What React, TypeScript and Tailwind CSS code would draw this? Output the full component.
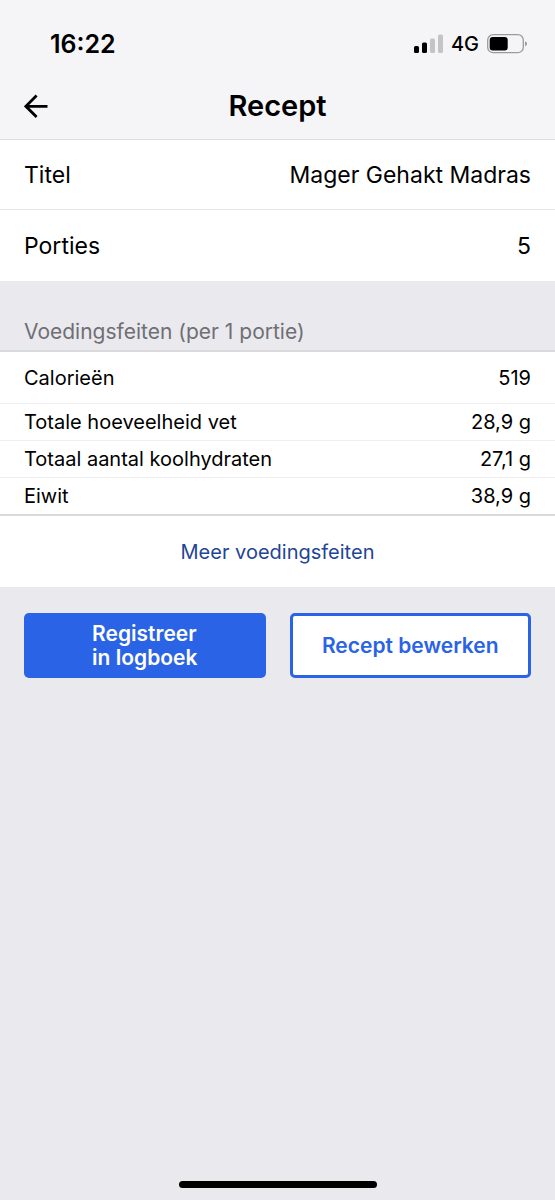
import React from 'react';

const details = [
    { label: "Titel", value: "Mager Gehakt Madras" },
    { label: "Porties", value: "5" },
];

const nutrients = [
    { label: "Totale hoeveelheid vet", value: "28,9 g" },
    { label: "Totaal aantal koolhydraten", value: "27,1 g" },
    { label: "Eiwit", value: "38,9 g" },
];

function StatusBar() {
    return (
        <div className="flex items-center justify-between h-22 pl-[50px] pr-7">
            <p className="text-[25px] leading-8 font-semibold">16:22</p>
            <div className="flex items-center gap-2">
                <svg width="29" height="20" viewBox="0 0 29 20" aria-label="Signaal">
                    <rect x="0" y="12" width="5" height="7" rx="1.5" fill="#000" />
                    <rect x="8" y="8.5" width="5" height="10.5" rx="1.5" fill="#000" />
                    <rect x="16" y="4.5" width="5" height="14.5" rx="1.5" fill="#c4c4c6" />
                    <rect x="24" y="0.5" width="5" height="18.5" rx="1.5" fill="#c4c4c6" />
                </svg>
                <span className="text-[20px] leading-8 font-medium">4G</span>
                <svg width="40" height="20" viewBox="0 0 40 20" aria-label="Batterij">
                    <rect x="0.7" y="0.7" width="35.6" height="18" rx="5.5" fill="none" stroke="#9b9b9d" strokeWidth="1.3" />
                    <rect x="2.7" y="3" width="18" height="13.5" rx="3" fill="#000" />
                    <path d="M38 7.2c1.3.4 2 1.3 2 2.5s-.7 2.1-2 2.500z" fill="#9b9b9d" />
                </svg>
            </div>
        </div>
    );
}

function App() {
    return (
        <div className="flex flex-col min-h-screen bg-[#eae9ee] text-black font-['Inter',sans-serif]">
            <header className="bg-[#f5f5f8] border-b border-[#dcdcde]">
                <StatusBar />
                {/* Equal side columns keep the title centered */}
                <div className="grid grid-cols-[1fr_auto_1fr] items-start px-6 pb-4">
                    <button type="button" aria-label="Terug" className="justify-self-start pt-[6px]">
                        <svg width="24" height="24" viewBox="0 0 24 24" fill="none" stroke="#000" strokeWidth="2.8">
                            <path d="M12.6 1.6L1.900 12.300l10.700 10.700M1.900 12.300H23.500" />
                        </svg>
                    </button>
                    <h1 className="text-[29px] leading-[35px] font-semibold">Recept</h1>
                </div>
            </header>

            <main className="flex-1">
                <dl className="bg-white text-[23px] leading-7">
                    {details.map((item) => (
                        <div key={item.label} className="flex items-center justify-between px-6 h-[71px] border-b border-[#e6e6e8] first:h-[70px] last:border-b-0">
                            <dt>{item.label}</dt>
                            <dd>{item.value}</dd>
                        </div>
                    ))}
                </dl>

                <h2 className="px-6 pt-[37px] pb-1 text-[21px] leading-7 text-[#6f6f74]">
                    Voedingsfeiten (per 1 portie)
                </h2>

                <table className="w-full bg-white border-y-2 border-[#dadadc] border-separate border-spacing-0 text-[20px] leading-7">
                    <tbody>
                        <tr className="h-[52px]">
                            <th scope="row" className="pl-6 text-left font-normal border-b border-[#eeeef0]">Calorieën</th>
                            <td className="pr-6 text-right border-b border-[#eeeef0]">519</td>
                        </tr>
                        {nutrients.map((item) => (
                            <tr key={item.label} className="group h-[37px] last:h-9">
                                <th scope="row" className="pl-6 text-left font-normal border-b border-[#eeeef0] group-last:border-b-0">{item.label}</th>
                                <td className="pr-6 text-right border-b border-[#eeeef0] group-last:border-b-0">{item.value}</td>
                            </tr>
                        ))}
                    </tbody>
                </table>

                <a href="#voedingsfeiten" className="flex items-center justify-center bg-white h-[71px] text-[20px] leading-7 text-[#1f4596]">
                    Meer voedingsfeiten
                </a>

                <div className="grid grid-cols-2 gap-6 px-6 pt-[26px]">
                    <button type="button" className="flex items-center justify-center h-[65px] rounded-[5px] bg-[#2a63e6] text-white text-left text-[21px] leading-6 font-semibold">
                        <span>Registreer<br />in logboek</span>
                    </button>
                    <button type="button" className="h-[65px] rounded-[5px] border-3 border-[#2a63e6] bg-white text-[#2a63e6] text-[21px] leading-6 font-semibold">
                        Recept bewerken
                    </button>
                </div>
            </main>

            <div className="mx-auto mb-3 w-[198px] h-[7px] rounded-full bg-black" />
        </div>
    );
}

export default App;
